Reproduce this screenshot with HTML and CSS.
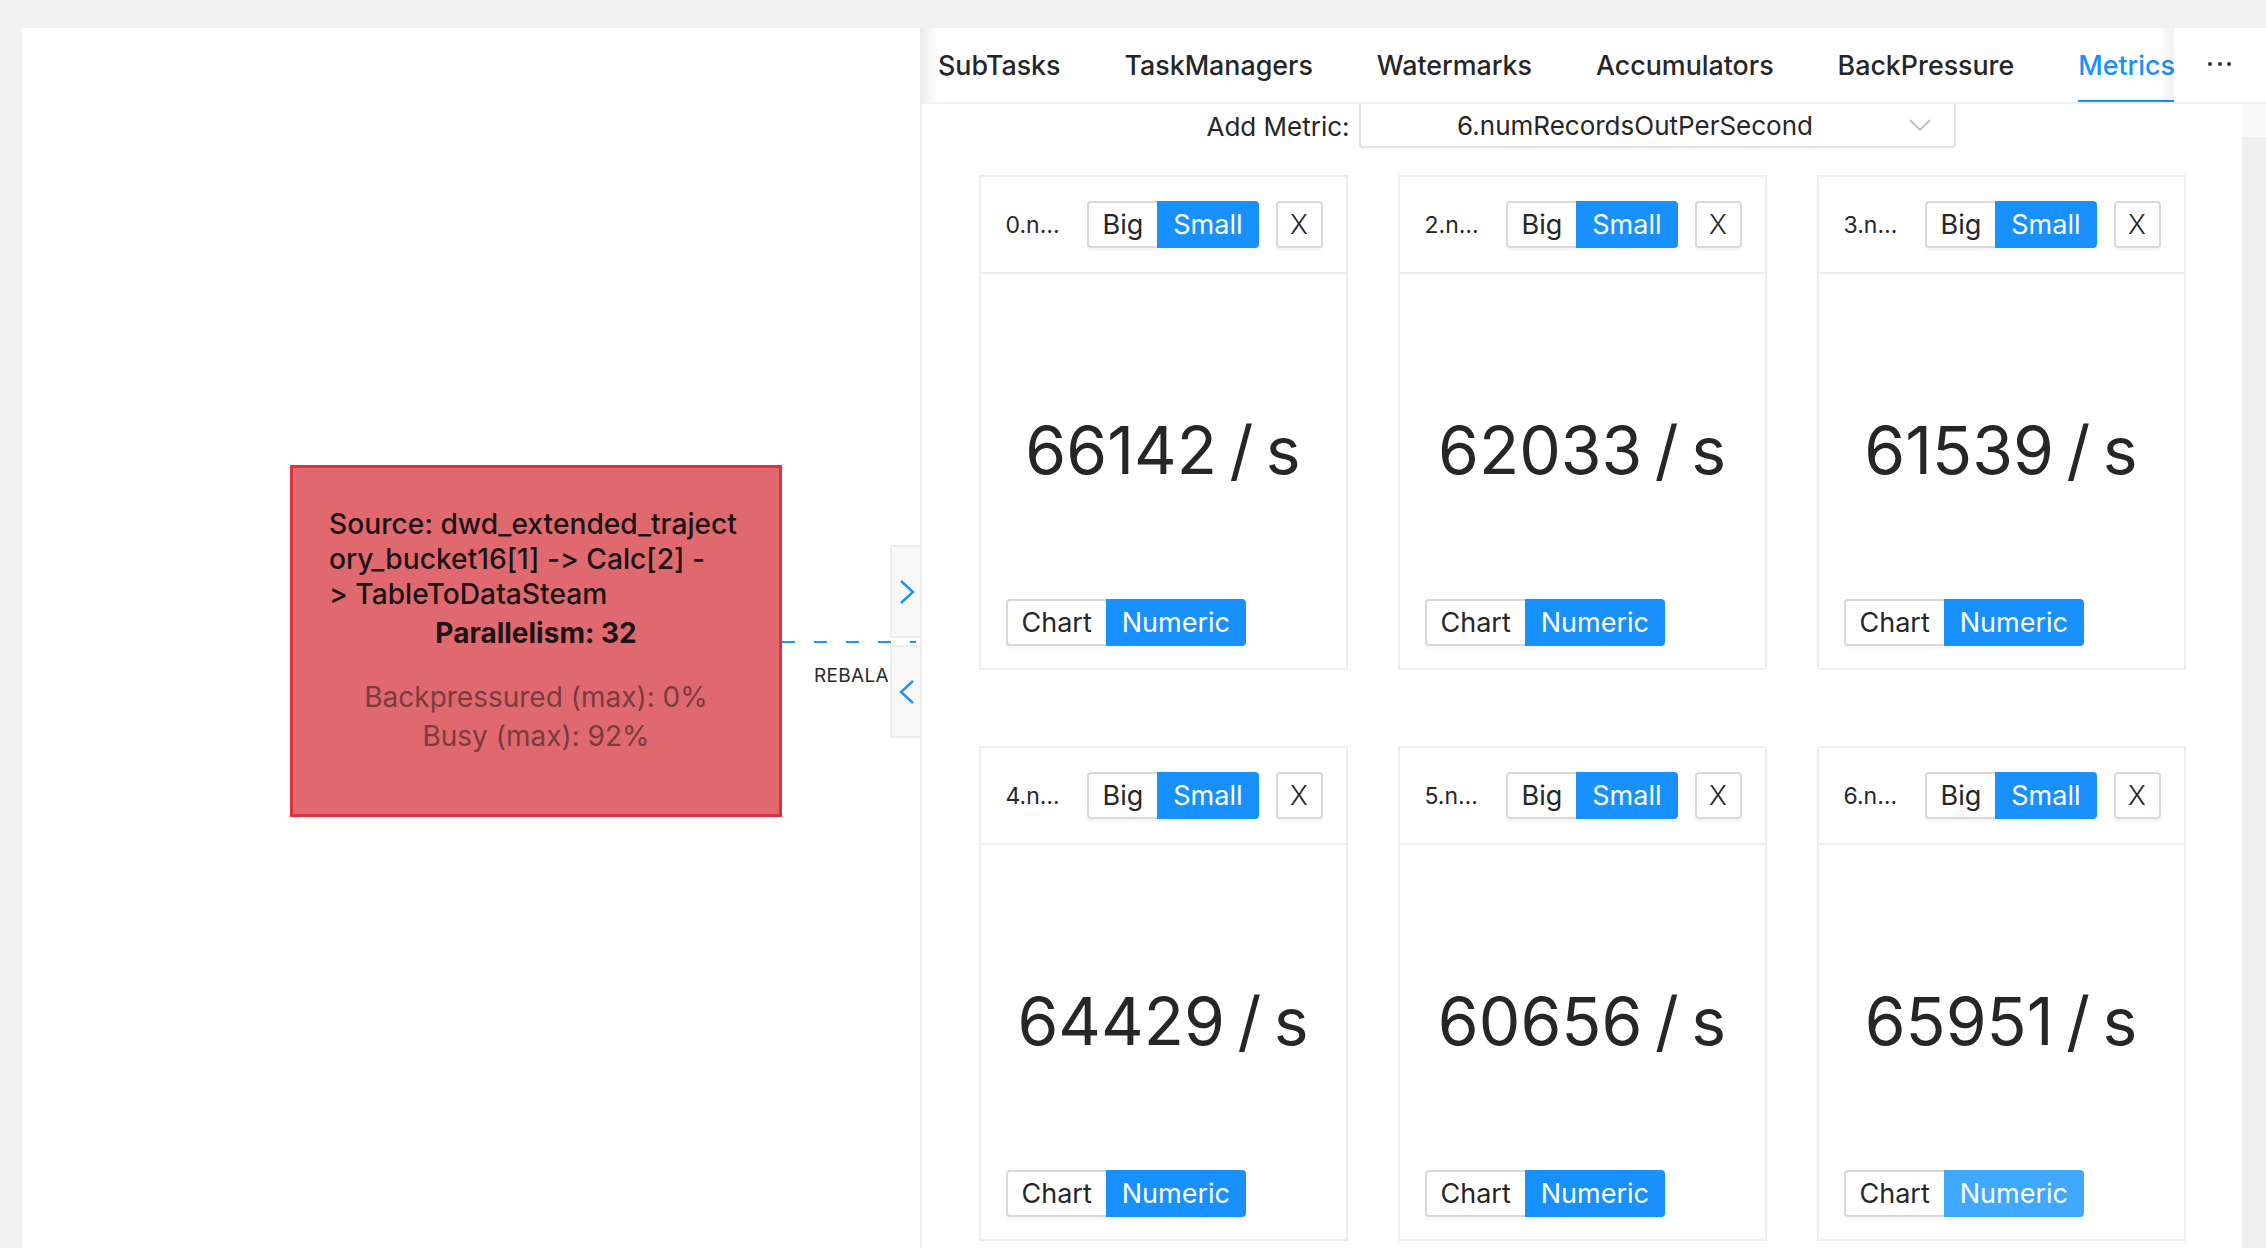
FILE: index.html
```html
<!DOCTYPE html>
<html lang="en">
<head>
<meta charset="utf-8">
<title>Job Metrics</title>
<link rel="stylesheet" href="styles.css">
</head>
<body>
<div class="page">
  <section class="graph">
    <div class="node">
      <div class="node-name">
        <span class="line">Source: dwd_extended_traject</span>
        <span class="line">ory_bucket16[1] -&gt; Calc[2] -</span>
        <span class="line">&gt; TableToDataSteam</span>
      </div>
      <div class="node-par">Parallelism: 32</div>
      <div class="node-stats">
        <div class="node-stat">Backpressured (max): 0%</div>
        <div class="node-stat">Busy (max): 92%</div>
      </div>
    </div>
    <svg class="edge" width="140" height="4" viewBox="0 0 140 4"><line x1="0" y1="2" x2="134" y2="2" stroke="#1890ff" stroke-width="2" stroke-dasharray="13 19"/></svg>
    <div class="edge-label">REBALANCE</div>
    <div class="toggles">
      <div class="toggle"><svg width="16" height="26" viewBox="0 0 16 26"><polyline points="2,2 14,13 2,24" fill="none" stroke="#1890ff" stroke-width="2.4"/></svg></div>
      <div class="toggle"><svg width="16" height="26" viewBox="0 0 16 26"><polyline points="14,2 2,13 14,24" fill="none" stroke="#1890ff" stroke-width="2.4"/></svg></div>
    </div>
  </section>

  <section class="detail">
    <div class="tabbar">
      <nav class="tabs">
        <div class="tab">SubTasks</div>
        <div class="tab">TaskManagers</div>
        <div class="tab">Watermarks</div>
        <div class="tab">Accumulators</div>
        <div class="tab">BackPressure</div>
        <div class="tab active">Metrics</div>
      </nav>
      <div class="more"><svg width="26" height="6" viewBox="0 0 26 6"><circle cx="3" cy="3" r="2" fill="#333"/><circle cx="13" cy="3" r="2" fill="#333"/><circle cx="22" cy="3" r="2" fill="#333"/></svg></div>
    </div>

    <div class="content">
      <div class="main">
        <div class="add-row">
          <span class="add-label">Add Metric:</span>
          <div class="select">
            <span class="select-value">6.numRecordsOutPerSecond</span>
            <svg class="select-arrow" width="22" height="13" viewBox="0 0 22 13"><polyline points="1,1 11,11 21,1" fill="none" stroke="#bfbfbf" stroke-width="1.8"/></svg>
          </div>
        </div>

        <div class="grid">
          <div class="card">
            <div class="card-head">
              <div class="card-title">0.numRecordsOutPerSecond</div>
              <div class="seg"><span class="seg-btn">Big</span><span class="seg-btn on">Small</span></div>
              <span class="close">X</span>
            </div>
            <div class="card-body">
              <div class="value">66142 / s</div>
              <div class="card-foot"><div class="seg"><span class="seg-btn">Chart</span><span class="seg-btn on">Numeric</span></div></div>
            </div>
          </div>

          <div class="card">
            <div class="card-head">
              <div class="card-title">2.numRecordsOutPerSecond</div>
              <div class="seg"><span class="seg-btn">Big</span><span class="seg-btn on">Small</span></div>
              <span class="close">X</span>
            </div>
            <div class="card-body">
              <div class="value">62033 / s</div>
              <div class="card-foot"><div class="seg"><span class="seg-btn">Chart</span><span class="seg-btn on">Numeric</span></div></div>
            </div>
          </div>

          <div class="card">
            <div class="card-head">
              <div class="card-title">3.numRecordsOutPerSecond</div>
              <div class="seg"><span class="seg-btn">Big</span><span class="seg-btn on">Small</span></div>
              <span class="close">X</span>
            </div>
            <div class="card-body">
              <div class="value">61539 / s</div>
              <div class="card-foot"><div class="seg"><span class="seg-btn">Chart</span><span class="seg-btn on">Numeric</span></div></div>
            </div>
          </div>

          <div class="card">
            <div class="card-head">
              <div class="card-title">4.numRecordsOutPerSecond</div>
              <div class="seg"><span class="seg-btn">Big</span><span class="seg-btn on">Small</span></div>
              <span class="close">X</span>
            </div>
            <div class="card-body">
              <div class="value">64429 / s</div>
              <div class="card-foot"><div class="seg"><span class="seg-btn">Chart</span><span class="seg-btn on">Numeric</span></div></div>
            </div>
          </div>

          <div class="card">
            <div class="card-head">
              <div class="card-title">5.numRecordsOutPerSecond</div>
              <div class="seg"><span class="seg-btn">Big</span><span class="seg-btn on">Small</span></div>
              <span class="close">X</span>
            </div>
            <div class="card-body">
              <div class="value">60656 / s</div>
              <div class="card-foot"><div class="seg"><span class="seg-btn">Chart</span><span class="seg-btn on">Numeric</span></div></div>
            </div>
          </div>

          <div class="card">
            <div class="card-head">
              <div class="card-title">6.numRecordsOutPerSecond</div>
              <div class="seg"><span class="seg-btn">Big</span><span class="seg-btn on">Small</span></div>
              <span class="close">X</span>
            </div>
            <div class="card-body">
              <div class="value">65951 / s</div>
              <div class="card-foot"><div class="seg"><span class="seg-btn">Chart</span><span class="seg-btn on hover">Numeric</span></div></div>
            </div>
          </div>
        </div>
      </div>
      <div class="scroll"></div>
    </div>
  </section>
</div>
</body>
</html>
```

FILE: styles.css
```css
* { box-sizing: border-box; }

html, body {
  margin: 0;
  padding: 0;
  background: #f1f1f1;
  font-family: Inter, "Noto Sans", "Liberation Sans", sans-serif;
  font-feature-settings: "calt" 0;
  font-variant-ligatures: none;
  color: #262626;
}

.page {
  display: flex;
  height: 1248px;
  padding: 28px 0 0 22px;
  overflow: hidden;
}

/* ---------- graph canvas ---------- */
.graph {
  position: relative;
  width: 898px;
  flex: none;
  background: #fff;
  overflow: hidden;
}

.node {
  position: absolute;
  left: 268px;
  top: 437px;
  width: 492px;
  height: 352px;
  background: #e0696f;
  border: 3px solid #e0303f;
  padding-top: 39px;
}

.node-name {
  margin-left: 36px;
  font-size: 28.2px;
  font-weight: 500;
  line-height: 35px;
  color: #1c1416;
}

.node-name .line { display: block; white-space: nowrap; }

.node-par {
  margin-top: 2px;
  text-align: center;
  font-size: 28px;
  font-weight: 700;
  line-height: 38px;
  color: #1c1416;
}

.node-stats {
  margin-top: 26px;
  text-align: center;
  font-size: 28px;
  line-height: 39px;
  color: #7a3b40;
}

.edge {
  position: absolute;
  left: 760px;
  top: 612px;
}

.edge-label {
  position: absolute;
  left: 792px;
  top: 637px;
  font-size: 19px;
  line-height: 22px;
  letter-spacing: 0.3px;
  color: #2a2a2a;
  white-space: nowrap;
}

.toggles {
  position: absolute;
  right: 0;
  top: 517px;
  display: flex;
  flex-direction: column;
  gap: 7px;
}

.toggle {
  width: 30px;
  height: 93px;
  background: #f8f8f8;
  border: 2px solid #ececec;
  border-right: 0;
  display: flex;
  align-items: center;
  justify-content: center;
  padding-left: 2px;
}

/* ---------- detail panel ---------- */
.detail {
  flex: 1;
  min-width: 0;
  display: flex;
  flex-direction: column;
  background: #fff;
  border-left: 2px solid #ececec;
}

.tabbar {
  display: flex;
  height: 76px;
  border-bottom: 2px solid #f0f0f0;
  flex: none;
}

.tabs {
  position: relative;
  width: 1252px;
  display: flex;
  gap: 64px;
  padding-left: 16px;
  overflow: hidden;
}

.tabs::before,
.tabs::after {
  content: "";
  position: absolute;
  top: 0;
  bottom: 0;
  width: 16px;
  pointer-events: none;
}

.tabs::before {
  left: 0;
  background: linear-gradient(to right, rgba(0,0,0,0.07), rgba(0,0,0,0));
}

.tabs::after {
  right: 0;
  background: linear-gradient(to left, rgba(0,0,0,0.06), rgba(0,0,0,0));
}

.tab {
  position: relative;
  display: flex;
  align-items: center;
  font-size: 26.8px;
  font-weight: 500;
  color: #262626;
  white-space: nowrap;
}

.tab.active { color: #1890ff; }

.tab.active::after {
  content: "";
  position: absolute;
  left: 0;
  right: 0;
  bottom: -1px;
  height: 3px;
  background: #1890ff;
}

.more {
  flex: 1;
  display: flex;
  align-items: center;
  justify-content: center;
  padding-bottom: 2px;
}

.content {
  flex: 1;
  display: flex;
  min-height: 0;
}

.main {
  flex: 1;
  min-width: 0;
}

.scroll {
  width: 24px;
  flex: none;
  background: linear-gradient(to bottom, #fafafa 0, #fafafa 33px, #efefef 33px);
}

.add-row {
  display: flex;
  justify-content: center;
  align-items: center;
  gap: 9px;
  height: 44px;
  padding-right: 2px;
}

.add-label {
  font-size: 26px;
  color: #262626;
}

.select {
  position: relative;
  width: 597px;
  height: 44px;
  border: 2px solid #e2e2e2;
  border-top: 0;
  border-radius: 0 0 4px 4px;
  box-shadow: 0 2px 2px rgba(0,0,0,0.03);
  display: flex;
  align-items: center;
  justify-content: center;
  padding-right: 44px;
}

.select-value {
  font-size: 26px;
  color: #262626;
}

.select-arrow {
  position: absolute;
  right: 23px;
  top: 15px;
}

.grid {
  margin-top: 27px;
  display: grid;
  grid-template-columns: repeat(3, 369px);
  column-gap: 50px;
  row-gap: 76px;
  justify-content: center;
}

.card {
  height: 495px;
  border: 2px solid #eeeeee;
  display: flex;
  flex-direction: column;
}

.card-head {
  height: 97px;
  flex: none;
  border-bottom: 2px solid #eeeeee;
  display: flex;
  align-items: center;
  padding: 0 23px 0 25px;
}

.card-title {
  flex: 1;
  min-width: 0;
  padding-right: 16px;
  font-size: 23px;
  line-height: 30px;
  color: #262626;
  white-space: nowrap;
  overflow: hidden;
  text-overflow: ellipsis;
}

.seg {
  display: inline-flex;
  flex: none;
  box-shadow: 0 3px 0 rgba(0,0,0,0.03);
  border-radius: 4px;
}

.seg-btn {
  display: block;
  height: 47px;
  padding: 0 14px;
  font-size: 27px;
  line-height: 43px;
  color: #262626;
  background: #fff;
  border: 2px solid #d9d9d9;
  white-space: nowrap;
}

.seg-btn:first-child {
  border-radius: 4px 0 0 4px;
  border-right: 0;
}

.seg-btn:last-child {
  border-radius: 0 4px 4px 0;
}

.seg-btn.on {
  background: #1890ff;
  border-color: #1890ff;
  color: #fff;
}

.seg-btn.on.hover {
  background: #40a9ff;
  border-color: #40a9ff;
}

.close {
  margin-left: 17px;
  width: 47px;
  height: 47px;
  flex: none;
  border: 2px solid #d9d9d9;
  border-radius: 4px;
  box-shadow: 0 3px 0 rgba(0,0,0,0.03);
  display: flex;
  align-items: center;
  justify-content: center;
  font-size: 27px;
  font-weight: 300;
  color: #262626;
}

.card-body {
  flex: 1;
  display: flex;
  flex-direction: column;
}

.value {
  flex: 1;
  display: flex;
  align-items: center;
  justify-content: center;
  padding-top: 26px;
  font-size: 66px;
  word-spacing: -6px;
  color: #262626;
  white-space: nowrap;
}

.card-foot {
  padding: 0 0 22px 25px;
}
```
